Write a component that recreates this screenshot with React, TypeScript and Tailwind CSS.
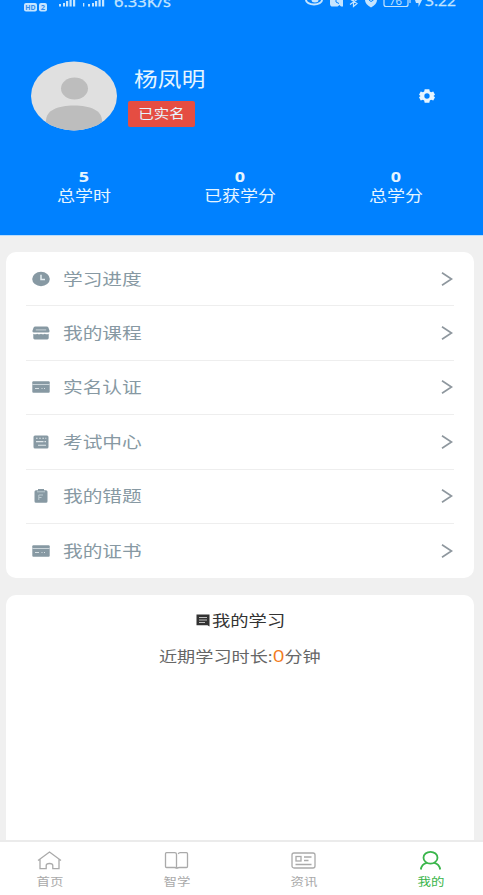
import type { ReactNode } from 'react';

const iconClass = "block w-[18px] h-4 shrink-0";

const ClockIcon = () => (
  <svg viewBox="0 0 18 16" className={iconClass}>
    <ellipse cx="9" cy="8" rx="8.8" ry="7.2" fill="#8799a3" />
    <path d="M9 3.8V8.4h4" fill="none" stroke="#e4edf1" strokeWidth="1.5" />
  </svg>
);

const ShopIcon = () => (
  <svg viewBox="0 0 18 16" className={iconClass}>
    <path d="M3.5 1.500h11q1.500 0 2 1.300l1.100 3.200q0 1.500-1.600 1.500H2Q.4 7.500.4 6l1.100-3.200q.5-1.300 2-1.300z" fill="#8799a3" />
    <path d="M3.800 4.900h10.400" stroke="#c9d3d8" strokeWidth="1" />
    <path d="M1.300 8.800q2 1 3.850 0 1.900 1 3.850 0 1.900 1 3.850 0 1.900 1 3.850 0v4.200a1.400 1.400 0 0 1-1.400 1.400H2.700a1.400 1.400 0 0 1-1.400-1.400z" fill="#8799a3" />
  </svg>
);

const CardIcon = () => (
  <svg viewBox="0 0 18 16" className={iconClass}>
    <rect x=".3" y="2.200" width="17.400" height="11.600" rx="1" fill="#8799a3" />
    <path d="M.3 5.500h17.400" stroke="#cbd5da" strokeWidth="1" />
    <path d="M3 9.500h4M9.500 9.500h1M12 9.500h1" stroke="#d6dfe3" strokeWidth="1.100" />
  </svg>
);

const ExamIcon = () => (
  <svg viewBox="0 0 18 16" className={iconClass}>
    <rect x="1.500" y="1.600" width="15" height="12.800" rx="1.500" fill="#8799a3" />
    <path d="M4 4.300h1.600M7.200 4.300h1.600M10.400 4.300H12M13.300 4.300h1M4 7.600h7.500M12.500 7.600h1.500M6 11.200h8" stroke="#e0e7ea" strokeWidth="1.100" />
  </svg>
);

const ClipboardIcon = () => (
  <svg viewBox="0 0 18 16" className={iconClass}>
    <path d="M4 2.300h2V1h6v1.300h2A1.500 1.500 0 0 1 15.500 3.800v9.400A1.500 1.500 0 0 1 14 14.700H4A1.500 1.500 0 0 1 2.500 13.200V3.800A1.500 1.500 0 0 1 4 2.300z" fill="#8799a3" />
    <path d="M5 3.800h8M6.800 7v5M6.800 7h4.200M7 9.500h2.500" fill="none" stroke="#bccad0" strokeWidth="1" />
  </svg>
);

const menu = [
  { icon: ClockIcon, title: "学习进度" },
  { icon: ShopIcon, title: "我的课程" },
  { icon: CardIcon, title: "实名认证" },
  { icon: ExamIcon, title: "考试中心" },
  { icon: ClipboardIcon, title: "我的错题" },
  { icon: CardIcon, title: "我的证书" },
];

const stats = [
  { value: 5, label: "总学时" },
  { value: 0, label: "已获学分" },
  { value: 0, label: "总学分" },
];

const tabs: { title: string; active?: boolean; icon: ReactNode }[] = [
  {
    title: "首页",
    icon: <path d="M1 10.500L12.500 2 24 10.500M3 9.500V18.700h6.200v-3.200q0-2 3.300-2t3.300 2v3.200H22V9.500" />,
  },
  {
    title: "智学",
    icon: <path d="M2.500 2.700h8.200q1.800 0 1.800 1.800v14q-.3-1-2-1h-8q-1 0-1-1V3.700q0-1 1-1zM14.200 4q.5-1.300 2-1.300h6.300q1 0 1 1v12.800q0 1-1 1h-7q-1.500 0-3 1" />,
  },
  {
    title: "资讯",
    icon: (
      <>
        <rect x="1" y="3" width="23" height="15" rx="2" />
        <rect x="5" y="6.500" width="5" height="4.500" />
        <path d="M13 7h7.500M13 10.500h4.500M4.500 14.500h16" />
      </>
    ),
  },
  {
    title: "我的",
    active: true,
    icon: (
      <>
        <ellipse cx="12.500" cy="7.700" rx="7" ry="5.900" />
        <path d="M2.800 19.500q.8-5.300 6-6.600M22.200 19.500q-.8-5.300-6-6.600" />
      </>
    ),
  },
];

// top status strip, its upper half runs off the screen
const StatusBar = () => (
  <svg viewBox="0 0 483 14" className="block w-full h-3.5 text-[#c5e5ff]" fill="currentColor">
    <rect x="24" y="3" width="13" height="8.500" rx="2" />
    <rect x="39" y="3" width="8" height="8.500" rx="2" />
    <text x="25.300" y="10" fontSize="7.500" fontWeight="bold" fill="#2d8df2" textLength="10.400" lengthAdjust="spacingAndGlyphs">HD</text>
    <text x="40.800" y="10" fontSize="7.500" fontWeight="bold" fill="#2d8df2">2</text>
    <path d="M59 4h2v2.500h-2zM63 3h2v3.500h-2zM66 1h2.200v5.500H66zM69.500 0h2.200v6.500h-2.200zM73 0h2.200v6.500H73z" />
    <path d="M83 3h1.300v3.500H83zM88 4h2v2.500h-2zM92 3h2v3.500h-2zM95 1h2.200v5.500H95zM98.500 0h2.200v6.500h-2.200zM102 0h2.200v6.500H102z" />
    <text x="114" y="6.500" fontSize="14" stroke="currentColor" strokeWidth=".3" textLength="57" lengthAdjust="spacingAndGlyphs">6.33K/s</text>
    <ellipse cx="314" cy="0" rx="8" ry="4.500" fill="none" stroke="currentColor" strokeWidth="2" />
    <ellipse cx="315" cy="0" rx="3.500" ry="2.500" />
    <path d="M330 0h13v6.500h-2l-1.500-1.500-2 1.500h-6q-1.500-1-1.500-2.500z" />
    <path d="M336 0v2l3 1.500" fill="none" stroke="#0081ff" strokeWidth="1" />
    <path d="M350 4.500l7-5M350-1l7 4.500-3.500 3V-1" fill="none" stroke="currentColor" strokeWidth="1.200" />
    <path d="M365 0h12q0 4-6 7.500-6-3.500-6-7.500z" />
    <path d="M369 0l2 1.500 2.500-1.500" fill="none" stroke="#0081ff" strokeWidth="1" />
    <path d="M384-3V4.500q0 2 2 2h20q2 0 2-2V-3M410 0v3" fill="none" stroke="currentColor" strokeWidth="1.200" />
    <text x="389" y="5" fontSize="10.500" textLength="13" lengthAdjust="spacingAndGlyphs">76</text>
    <path d="M415 0h7l-3.500 7v-4h-2.500z" />
    <text x="425" y="6.300" fontSize="14" stroke="currentColor" strokeWidth=".3" textLength="31" lengthAdjust="spacingAndGlyphs">3:22</text>
  </svg>
);

const Header = () => (
  <header className="h-[236px] bg-[#0081ff] border-b border-[#b9dcfb] text-[#e6f5ff]">
    <StatusBar />
    <div className="flex items-start pl-[31px] pr-12 pt-[47px]">
      <svg viewBox="0 0 86 70" className="block w-[86px] h-[70px] shrink-0">
        <clipPath id="avatar"><ellipse cx="43" cy="35" rx="43" ry="34.500" /></clipPath>
        <g clipPath="url(#avatar)">
          <rect width="86" height="70" fill="#e0e0e0" />
          <ellipse cx="43.500" cy="27.500" rx="13.500" ry="11" fill="#bdbdbd" />
          <path d="M15 70V60C15 49 27 44.500 43 44.500S71 49 71 60V70z" fill="#bdbdbd" />
        </g>
      </svg>
      <div className="ml-[11px] pt-[5px]">
        <div className="ml-1.5 h-[27px] leading-[27px] text-xl tracking-[0.2px] origin-left scale-x-[1.18]">杨凤明</div>
        <div className="mt-2 w-[67px] h-[26px] flex items-center justify-center rounded-xs bg-[#e54d42] text-[13px]">
          <span className="scale-x-[1.19]">已实名</span>
        </div>
      </div>
      <svg viewBox="0 0 24 24" className="ml-auto mt-[27px] w-4 h-4" preserveAspectRatio="none" fill="currentColor">
        <path fillRule="evenodd" d="M8.500 2h7l.7 3.300 2 1.100L21.400 5.300 24 10l-2.300 2 2.300 2-2.600 4.700-3.200-1.100-2 1.100-.7 3.300h-7l-.7-3.300-2-1.100-3.200 1.100L0 14l2.300-2L0 10l2.600-4.700 3.200 1.100 2-1.100zM12 8a4 4 0 1 0 0 8 4 4 0 0 0 0-8z" />
      </svg>
    </div>
    <div className="mt-9 pl-1.5 pr-[9px] grid grid-cols-3 text-center text-[15px] leading-[19px]">
      {stats.map((item) => (
        <div key={item.label} className="scale-x-[1.2]">
          <div className="font-['Open_Sans'] font-bold text-[15px]">{item.value}</div>
          <div>{item.label}</div>
        </div>
      ))}
    </div>
  </header>
);

export default function App() {
  return (
    <div className="h-[895px] flex flex-col overflow-hidden bg-[#f0f0f0] font-['Open_Sans','Noto_Sans_CJK_SC',sans-serif]">
      <Header />

      <div className="mt-4 ml-1.5 mr-[9px] h-[326px] shrink-0 rounded-[10px] bg-white px-5">
        {menu.map((item) => (
          <div key={item.title} className="flex items-center h-[54.4px] border-b border-[#eeeeee] last:border-b-0 pl-1.5">
            <item.icon />
            <span className="ml-[13px] text-base text-[#8799a3] origin-left scale-x-[1.23]">{item.title}</span>
            <svg viewBox="0 0 12 14" className="ml-auto mr-px w-3 h-3.5" fill="none" stroke="#8e979e" strokeWidth="1.7">
              <path d="M1 .8L10.500 7 1 13.200" />
            </svg>
          </div>
        ))}
      </div>

      <div className="mt-[17px] ml-1.5 mr-[9px] flex-1 rounded-t-[10px] bg-white pt-[13px]">
        <div className="flex items-center justify-center h-6 text-[#333333]">
          <svg viewBox="0 0 14 13" className="mr-0.5 w-3.5 h-[13px]">
            <path d="M.5.500h13v12l-2-1.200H.5z" fill="currentColor" />
            <path d="M3 3.500h8M3 6h8M3 8.500h6" stroke="#c0c0c0" strokeWidth="1" />
          </svg>
          <span className="w-[73px] text-[15px] origin-left scale-x-[1.22]">我的学习</span>
        </div>
        <div className="mt-3 h-6 flex items-center justify-center text-[15px] text-[#666666]">
          <span className="scale-x-[1.21]">
            近期学习时长:<span className="text-[17px] text-[#f37b1d]">0</span>分钟
          </span>
        </div>
      </div>

      <nav className="h-[55px] shrink-0 flex justify-between border-t-2 border-[#ebebeb] bg-white pl-[34px] pr-[37px] pt-2">
        {tabs.map((tab) => (
          <div key={tab.title} className={`w-[31px] flex flex-col items-center ${tab.active ? "text-[#39b54a]" : "text-[#aaaaaa]"}`}>
            <svg viewBox="0 0 25 21" className="w-[25px] h-[21px]" fill="none" stroke="currentColor" strokeWidth={tab.active ? 1.8 : 1.3}>
              {tab.icon}
            </svg>
            <span className="mt-[3px] whitespace-nowrap text-[11px] leading-4 scale-x-[1.22]">{tab.title}</span>
          </div>
        ))}
      </nav>
    </div>
  );
}
